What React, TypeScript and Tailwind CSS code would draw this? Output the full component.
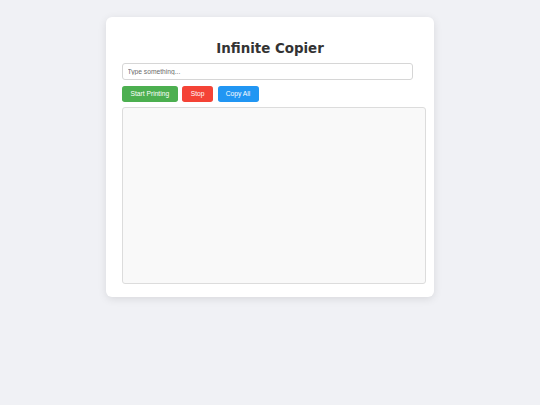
import React, { useState } from 'react';

export default function App() {
  const [text, setText] = useState('');
  const [output] = useState('');

  return (
    <div className="min-h-screen bg-[#f0f1f5] pt-[17px]" style={{ fontFamily: '"Liberation Sans", Arial, sans-serif' }}>
      <div className="mx-auto w-[328px] h-[280px] bg-white rounded-[6px] shadow-[0_2px_8px_rgba(0,0,0,0.1)] pt-[23.5px] pl-[16px]">
        <h1 className="text-center pr-[16px] text-[13.4px] leading-[15.6px] font-bold text-[#333]" style={{ fontFamily: '"DejaVu Sans", Verdana, sans-serif' }}>
          Infinite Copier
        </h1>
        <input
          type="text"
          value={text}
          onChange={(e) => setText(e.target.value)}
          placeholder="Type something..."
          className="mt-[7.2px] block w-[291px] h-[16.5px] border border-[#d6d6d6] rounded-[3px] px-[4.5px] text-[6.7px] text-[#333] placeholder-[#6b6b6b] outline-none"
        />
        <div className="mt-[6.6px] flex gap-[4.7px]">
          <button className="h-[15.7px] px-[8.5px] rounded-[2.7px] bg-[#4caf50] text-white text-[6.7px] leading-none">
            Start Printing
          </button>
          <button className="h-[15.7px] px-[8.4px] rounded-[2.7px] bg-[#f44336] text-white text-[6.7px] leading-none">
            Stop
          </button>
          <button className="h-[15.7px] px-[8.2px] rounded-[2.7px] bg-[#2196f3] text-white text-[6.7px] leading-none">
            Copy All
          </button>
        </div>
        <div className="mt-[4.7px] w-[304px] h-[177.6px] border border-[#dcdcdc] rounded-[3px] bg-[#f9f9f9] text-[6.7px] whitespace-pre-wrap overflow-y-auto">
          {output}
        </div>
      </div>
    </div>
  );
}
